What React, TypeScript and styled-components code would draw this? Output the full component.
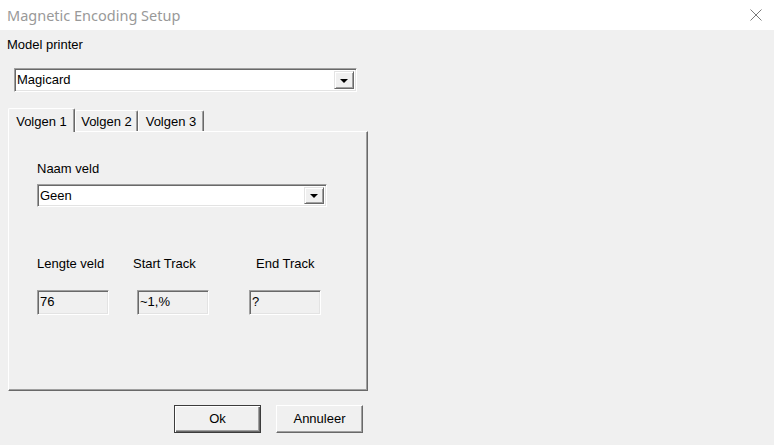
import React from "react";
import styled, { createGlobalStyle } from "styled-components";

const GlobalStyle = createGlobalStyle`
  html, body {
    margin: 0;
    padding: 0;
    background: #f0f0f0;
  }
  body {
    font-family: "Liberation Sans", Arial, sans-serif;
    font-size: 13px;
    color: #000;
  }
`;

const StyledWindow = styled.div`
  width: 774px;
  height: 445px;
  background: #f0f0f0;
  display: flex;
  flex-direction: column;
  overflow: hidden;
`;

const StyledTitleBar = styled.div`
  height: 30px;
  flex: none;
  background: #fff;
  display: flex;
  align-items: center;
  justify-content: space-between;
  padding: 0 12px 0 7px;
`;

const StyledTitle = styled.div`
  font-family: "Noto Sans", "Open Sans", sans-serif;
  font-size: 14.5px;
  color: #999;
  margin-top: -1px;
`;

const StyledBody = styled.div`
  padding: 0 0 0 8px;
  display: flex;
  flex-direction: column;
`;

const StyledLabel = styled.div<{ $indent?: number }>`
  line-height: 16px;
  height: 16px;
  margin-left: ${(p) => p.$indent ?? 0}px;
  white-space: nowrap;
`;

const StyledCombo = styled.div<{ $width: number; $height: number }>`
  box-sizing: border-box;
  width: ${(p) => p.$width}px;
  height: ${(p) => p.$height}px;
  background: #fff;
  border: 1px solid;
  border-color: #a0a0a0 #fff #fff #a0a0a0;
  box-shadow: inset 1px 1px 0 #696969, inset -1px -1px 0 #e3e3e3;
  display: flex;
  align-items: center;
  justify-content: space-between;
  padding: 2px 2px 2px 2px;
`;

const StyledComboText = styled.span`
  line-height: 16px;
`;

const StyledDropButton = styled.div`
  box-sizing: border-box;
  width: 20px;
  height: 100%;
  background: #f0f0f0;
  border: 1px solid;
  border-color: #e3e3e3 #696969 #696969 #e3e3e3;
  box-shadow: inset 1px 1px 0 #fff, inset -1px -1px 0 #a0a0a0;
  display: flex;
  align-items: center;
  justify-content: center;
`;

const StyledArrow = styled.div`
  width: 0;
  height: 0;
  border-left: 4px solid transparent;
  border-right: 4px solid transparent;
  border-top: 4px solid #000;
  margin-top: 1px;
`;

const StyledTabStrip = styled.div`
  display: flex;
  align-items: flex-end;
  height: 23px;
  margin-top: 16px;
  position: relative;
  z-index: 1;
`;

const StyledTab = styled.div<{ $active?: boolean; $width: number }>`
  box-sizing: border-box;
  width: ${(p) => p.$width}px;
  height: ${(p) => (p.$active ? 24 : 21)}px;
  margin-bottom: ${(p) => (p.$active ? -1 : 0)}px;
  background: #f0f0f0;
  border-top: 1px solid #fff;
  border-left: 1px solid #fff;
  border-right: 1px solid #696969;
  box-shadow: inset -1px 0 0 #a0a0a0;
  border-radius: 2px 2px 0 0;
  display: flex;
  justify-content: center;
  padding-top: ${(p) => (p.$active ? 5 : 3)}px;
  line-height: 16px;
  white-space: nowrap;
`;

const StyledPanel = styled.div`
  box-sizing: border-box;
  width: 360px;
  height: 260px;
  border: 1px solid;
  border-color: #fff #696969 #696969 #fff;
  box-shadow: inset -1px -1px 0 #a0a0a0;
  padding: 29px 0 0 28px;
  display: flex;
  flex-direction: column;
`;

const StyledFieldRow = styled.div`
  display: flex;
  margin-top: 49px;
`;

const StyledFieldColumn = styled.div<{ $width: number }>`
  width: ${(p) => p.$width}px;
  display: flex;
  flex-direction: column;
`;

const StyledField = styled.div<{ $indent: number }>`
  box-sizing: border-box;
  width: 72px;
  height: 25px;
  margin-top: 18px;
  margin-left: ${(p) => p.$indent}px;
  background: #f0f0f0;
  border: 1px solid;
  border-color: #a0a0a0 #fff #fff #a0a0a0;
  box-shadow: inset 1px 1px 0 #696969, inset -1px -1px 0 #e3e3e3;
  padding: 3px 0 0 2px;
  line-height: 16px;
`;

const StyledButtonRow = styled.div`
  width: 360px;
  display: flex;
  justify-content: flex-end;
  gap: 15px;
  padding-right: 5px;
  box-sizing: border-box;
  margin-top: 14px;
`;

const StyledButton = styled.div<{ $default?: boolean }>`
  box-sizing: border-box;
  width: 87px;
  height: 28px;
  background: #f0f0f0;
  border: 1px solid;
  border-color: ${(p) =>
    p.$default ? "#3c3c3c" : "#fff #696969 #696969 #fff"};
  box-shadow: ${(p) =>
    p.$default
      ? "inset 1px 1px 0 #fff, inset -1px -1px 0 #696969, inset -2px -2px 0 #a0a0a0"
      : "inset -1px -1px 0 #a0a0a0"};
  display: flex;
  align-items: center;
  justify-content: center;
  line-height: 16px;
`;

const CloseIcon = () => (
  <svg width="12" height="12" viewBox="0 0 12 12">
    <path d="M0.5 0.5 L11.5 11.5 M11.5 0.5 L0.5 11.5" stroke="#7a7a7a" strokeWidth="1" fill="none" />
  </svg>
);

const Combo = ({ text, width, height }: { text: string; width: number; height: number }) => (
  <StyledCombo $width={width} $height={height}>
    <StyledComboText>{text}</StyledComboText>
    <StyledDropButton>
      <StyledArrow />
    </StyledDropButton>
  </StyledCombo>
);

const fields = [
  { label: "Lengte veld", value: "76", width: 96, labelIndent: 0, fieldIndent: 0 },
  { label: "Start Track", value: "~1,%", width: 116, labelIndent: 0, fieldIndent: 4 },
  { label: "End Track", value: "?", width: 100, labelIndent: 7, fieldIndent: 0 },
];

const App = () => {
  return (
    <StyledWindow>
      <GlobalStyle />
      <StyledTitleBar>
        <StyledTitle>Magnetic Encoding Setup</StyledTitle>
        <CloseIcon />
      </StyledTitleBar>
      <StyledBody>
        <div style={{ height: 7 }} />
        <StyledLabel $indent={-1}>Model printer</StyledLabel>
        <div style={{ height: 15 }} />
        <div style={{ marginLeft: 6 }}>
          <Combo text="Magicard" width={343} height={24} />
        </div>
        <StyledTabStrip>
          <StyledTab $active $width={67}>Volgen 1</StyledTab>
          <StyledTab $width={63}>Volgen 2</StyledTab>
          <StyledTab $width={66}>Volgen 3</StyledTab>
        </StyledTabStrip>
        <StyledPanel>
          <StyledLabel>Naam veld</StyledLabel>
          <div style={{ height: 7 }} />
          <Combo text="Geen" width={290} height={23} />
          <StyledFieldRow>
            {fields.map((f) => (
              <StyledFieldColumn key={f.label} $width={f.width}>
                <StyledLabel $indent={f.labelIndent}>{f.label}</StyledLabel>
                <StyledField $indent={f.fieldIndent}>{f.value}</StyledField>
              </StyledFieldColumn>
            ))}
          </StyledFieldRow>
        </StyledPanel>
        <StyledButtonRow>
          <StyledButton $default>Ok</StyledButton>
          <StyledButton>Annuleer</StyledButton>
        </StyledButtonRow>
      </StyledBody>
    </StyledWindow>
  );
};

export default App;
